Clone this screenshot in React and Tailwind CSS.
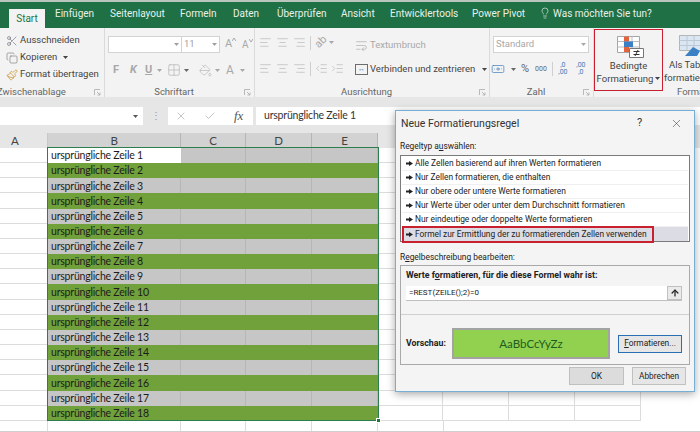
import React from "react";
import { Scissors, Copy, Paintbrush, Lightbulb, X, Check, AlignLeft, AlignCenter, AlignRight, Grid2x2, PaintBucket, WrapText, IndentDecrease, IndentIncrease, Banknote, ArrowUp } from "lucide-react";

const Caret = ({ className = "" }) => (
  <svg width="5" height="3" viewBox="0 0 5 3" className={`shrink-0 ${className}`}><path d="M0 0h5L2.5 3z" fill="currentColor" /></svg>
);

const Launcher = () => (
  <svg width="7" height="7" viewBox="0 0 7 7" className="text-[#a9a9a9]"><path d="M.5 6V.5H6M3 3l3 3M6 3.5V6H3.5" fill="none" stroke="currentColor" strokeWidth=".8" /></svg>
);

const tabs = [
  ["Einfügen", "w-[55px]"],
  ["Seitenlayout", "w-[70px]"],
  ["Formeln", "w-[53px]"],
  ["Daten", "w-[44px]"],
  ["Überprüfen", "w-[64px]"],
  ["Ansicht", "w-[49px]"],
  ["Entwicklertools", "w-[82px]"],
  ["Power Pivot", "w-[68px]"],
];

function TabBar() {
  return (
    <div className="h-[28px] border-t-2 border-[#b9c6bd] bg-[#1f7044] pl-[9px] flex items-end text-[10px] text-[#e8f0ea]">
      <div className="w-[36px] h-[19px] bg-[#f3f3f3] text-[#217346] flex justify-center pt-[2px]">Start</div>
      <div className="h-[26px] flex items-center">
        <div className="w-[10px]" />
        <div className="flex items-center pb-[4px] h-full">
          {tabs.map(([t, w]) => (
            <div key={t} className={`${w} shrink-0 whitespace-nowrap`}>{t}</div>
          ))}
          <Lightbulb size={12} strokeWidth={1.3} className="ml-[-1px]" />
          <div className="ml-[2px] whitespace-nowrap">Was möchten Sie tun?</div>
        </div>
      </div>
    </div>
  );
}

function Group({ w, label, children, start = false, launcher = true }) {
  return (
    <div className={`${w} shrink-0 h-full flex flex-col border-r border-[#dadada]`}>
      <div className="flex-1 relative min-h-0">{children}</div>
      <div className={`h-[12px] mb-[-1px] flex items-center ${start ? "justify-start" : "justify-center pr-[11px]"} relative text-[9.5px] text-[#666] whitespace-nowrap overflow-hidden`}>
        <span className={start ? "-ml-[3px]" : ""}>{label}</span>
        {launcher && <span className="absolute right-[3px] top-[3px]"><Launcher /></span>}
      </div>
    </div>
  );
}

function Ribbon() {
  const g = "text-[#a8a8a8]";
  return (
    <div className="h-[69px] bg-[#f3f3f3] flex text-[9.5px] text-[#444] whitespace-nowrap">
      <Group w="w-[105px]" label="Zwischenablage" start>
        <div className="pl-[6px] pt-[4px] flex flex-col">
          <div className="h-[17px] flex items-center gap-[2px]"><Scissors size={12} className="text-[#6c6f80]" strokeWidth={1.3} /><span>Ausschneiden</span></div>
          <div className="h-[17px] flex items-center gap-[2px]"><Copy size={12} className="text-[#7d7d7d]" strokeWidth={1.3} /><span>Kopieren</span><Caret className="ml-[4px]" /></div>
          <div className="h-[17px] flex items-center gap-[2px]"><Paintbrush size={12} className="text-[#c99a3b]" strokeWidth={1.6} /><span>Format übertragen</span></div>
        </div>
      </Group>
      <Group w="w-[150px]" label="Schriftart">
        <div className="pl-[3px] pt-[8px]">
          <div className="flex items-center">
            <div className="w-[112px] h-[17px] bg-white border border-[#d3d3d3] flex items-center text-[#a0a0a0]">
              <div className="w-[73px] h-full border-r border-[#d3d3d3] flex items-center justify-end pr-[2px]"><Caret /></div>
              <div className="flex-1 flex items-center justify-between px-[2px]"><span>11</span><Caret /></div>
            </div>
            <div className={`ml-[5px] w-[17px] flex items-start text-[11px] ${g}`}>A<svg width="4" height="3" viewBox="0 0 4 3" className="mt-[2px]"><path d="M0 3l2-3 2 3" fill="none" stroke="currentColor" /></svg></div>
            <div className={`flex items-start text-[10px] ${g}`}>A<svg width="4" height="3" viewBox="0 0 4 3" className="mt-[2px]"><path d="M0 0l2 3 2-3" fill="none" stroke="currentColor" /></svg></div>
          </div>
          <div className={`flex items-center mt-[8px] text-[11px] font-bold ${g}`}>
            <span className="ml-[5px] w-[17px]">F</span>
            <span className="w-[15px] italic">K</span>
            <span className="w-[12px] underline">U</span>
            <Caret className="mr-[5px]" />
            <Grid2x2 size={14} strokeWidth={1} className="mr-[2px]" />
            <Caret className="ml-[1px] mr-[10px] text-[#666]" />
            <PaintBucket size={13} strokeWidth={1} />
            <Caret className="ml-[3px] mr-[6px]" />
            <span className="text-[12px] font-normal">A</span>
            <Caret className="ml-[6px]" />
          </div>
        </div>
      </Group>
      <Group w="w-[235px]" label="Ausrichtung">
        <div className={`flex ${g}`}>
          <div className="pl-[3px] pt-[5px] w-[96px] shrink-0">
            <div className="flex items-center h-[19px]">
              <AlignLeft size={13} strokeWidth={1} className="ml-[1px] mr-[4px]" />
              <AlignCenter size={13} strokeWidth={1} className="mr-[4px]" />
              <AlignRight size={13} strokeWidth={1} />
              <div className="w-px h-[14px] bg-[#cfcfcf] mx-[4px]" />
              <span className="text-[11px] -rotate-45">ab</span>
              <Caret className="ml-[2px]" />
            </div>
            <div className="flex items-center h-[19px] mt-[7px]">
              <AlignLeft size={13} strokeWidth={1} className="ml-[1px] mr-[4px]" />
              <AlignCenter size={13} strokeWidth={1} className="mr-[4px]" />
              <AlignRight size={13} strokeWidth={1} />
              <div className="w-px h-[14px] bg-[#cfcfcf] mx-[4px]" />
              <IndentDecrease size={13} strokeWidth={1} className="mr-[3px]" />
              <IndentIncrease size={13} strokeWidth={1} />
            </div>
          </div>
          <div className="pt-[9px] pl-[4px]">
            <div className="flex items-center gap-[2px] h-[17px]"><WrapText size={13} strokeWidth={1.2} /><span>Textumbruch</span></div>
            <div className="flex items-center gap-[2px] h-[17px] mt-[7px] text-[#444]">
              <div className="w-[13px] h-[11px] shrink-0 border border-[#6d6d6d] flex items-center justify-center text-[#3578b5] text-[7px] leading-none">↔</div>
              <span>Verbinden und zentrieren</span>
              <Caret className="ml-[5px]" />
            </div>
          </div>
        </div>
      </Group>
      <Group w="w-[104px]" label="Zahl">
        <div className="pl-[3px] pt-[8px]">
          <div className="w-[96px] h-[17px] bg-white border border-[#d3d3d3] flex items-center justify-between px-[2px] text-[#a8a8a8]"><span>Standard</span><Caret /></div>
          <div className="flex items-center mt-[8px] text-[#666]">
            <Banknote size={14} strokeWidth={1.2} className="text-[#3f7cba] ml-[-2px]" />
            <Caret className="ml-[6px] mr-[5px]" />
            <span className="text-[11px]">%</span>
            <span className="text-[7px] ml-[6px]">000</span>
            <div className="w-px h-[14px] bg-[#cfcfcf] ml-[5px] mr-[3px]" />
            <span className="text-[7px] leading-[7px] w-[14px] text-center text-[#3f7cba]">,0<br />,00</span>
            <span className="text-[7px] leading-[7px] w-[14px] ml-[4px] text-center text-[#3f7cba]">,00<br />,0</span>
          </div>
        </div>
      </Group>
      <div className="flex-1 min-w-0 h-full flex flex-col">
        <div className="flex flex-1 min-h-0">
          <div className="w-[69px] shrink-0 h-[62px] mt-[1px] border-[1.5px] border-[#c8202e] flex flex-col items-center text-[#444] leading-[13px]">
            <svg width="27" height="22" viewBox="0 0 27 22" className="mt-[5.5px] mb-[1px] ml-[3px] shrink-0">
              <path d="M.5.5h22v16H.5z" fill="#fff" stroke="#a5a5a5" />
              <path d="M.5 5.5h22M.5 11h22M7.5.5v16M15 .5v16" stroke="#bbb" fill="none" />
              <path d="M7 .5h5v5H7zM7 11h5v5H7z" fill="#e2633d" />
              <path d="M7 5.5h9V11H7z" fill="#3b7fc4" />
              <path d="M12.5 12.5h14v9h-14z" fill="#fff" stroke="#777" />
              <path d="M16.5 15.5h6M16.5 18.5h6M21 14l-3 6" stroke="#333" fill="none" />
            </svg>
            <div>Bedingte</div>
            <div className="flex items-center">Formatierung<Caret className="ml-[2px]" /></div>
          </div>
          <div className="flex-1 min-w-0 flex flex-col items-start text-[#444] leading-[13px] overflow-hidden pl-[1px] pt-[7px]">
            <svg width="24" height="22" viewBox="0 0 24 22" className="ml-[15px] mb-[1px] shrink-0">
              <path d="M.5.5h22v15H.5z" fill="#dbe6f3" stroke="#b5b5b5" />
              <path d="M.5 5.5h22M.5 10.5h22M8 .5v15M15 .5v15" stroke="#bcc8d6" fill="none" />
              <path d="M6 21l8-9 7 4-3 5z" fill="#3b7fc4" />
            </svg>
            <div className="pl-[5px]">Als Tabelle</div>
            <div>formatieren</div>
          </div>
        </div>
        <div className="h-[12px] mb-[-1px] pl-[83px] flex items-center text-[9.5px] text-[#666] overflow-hidden">Format</div>
      </div>
    </div>
  );
}

function FormulaBar() {
  return (
    <div className="h-[36px] bg-[#e6e6e6] pt-[10px] pb-[8px] flex items-stretch text-[#a5a5a5]">
      <div className="w-[143px] bg-white flex items-center justify-end pr-[5px] text-[#555]"><Caret /></div>
      <div className="w-[25px] flex items-center justify-center text-[10px] text-[#999] leading-none">⋮</div>
      <div className="w-[85px] bg-white flex items-center pl-[7px] gap-[17px]">
        <X size={12} strokeWidth={1.3} />
        <Check size={12} strokeWidth={1.3} />
        <span className="ml-[1px] font-['Liberation_Serif',serif] italic text-[13px] text-[#555]">fx</span>
      </div>
      <div className="ml-[3px] flex-1 bg-white flex items-center pl-[8px] font-['Lato',sans-serif] text-[10.5px] tracking-[-0.2px] text-[#333]">ursprüngliche Zeile 1</div>
    </div>
  );
}

const rowsData = Array.from({ length: 18 }, (_, i) => i + 1);

function Sheet() {
  const head = "h-full flex items-center justify-center border-r";
  const rest = (
    <>
      <div className="w-[65px] shrink-0 h-full border-r border-[#dcdcdc]" />
      <div className="w-[66px] shrink-0 h-full border-r border-[#dcdcdc]" />
      <div className="w-[66px] shrink-0 h-full border-r border-[#dcdcdc]" />
      <div className="w-[66px] shrink-0 h-full border-r border-[#dcdcdc]" />
    </>
  );
  return (
    <div className="relative font-['Lato',sans-serif] text-[10.5px] tracking-[-0.2px] text-[#1c1c1c]">
      <div className="h-[15px] bg-[#e6e6e6] flex text-[#444] text-[11.5px]">
        <div className="w-[48px] h-full flex items-center pl-[11px] border-r border-[#c8c8c8]">A</div>
        <div className={`w-[133px] bg-[#d2d2d2] ${head} border-[#b5b5b5]`}>B</div>
        <div className={`w-[65px] bg-[#d2d2d2] ${head} border-[#b5b5b5]`}>C</div>
        <div className={`w-[66px] bg-[#d2d2d2] ${head} border-[#b5b5b5]`}>D</div>
        <div className={`w-[66px] bg-[#d2d2d2] ${head} border-[#b5b5b5]`}>E</div>
      </div>
      {rowsData.map((n) => {
        const green = n % 2 === 0;
        const gray = green ? "bg-[#70a13b] border-[#70a13b]" : "bg-[#c6c6c6] border-[#b6b6b6]";
        return (
          <div key={n} className="h-[15.17px] flex">
            <div className="w-[48px] h-full shrink-0 border-b border-[#dcdcdc]" />
            <div className={`w-[133px] shrink-0 h-full pl-[3px] pt-[1px] flex items-center ${n === 1 ? "bg-white" : green ? "bg-[#70a13b]" : "bg-[#c6c6c6]"} ${n > 1 && !green ? "border-r border-[#b6b6b6]" : ""}`}>
              ursprüngliche Zeile {n}
            </div>
            <div className={`w-[65px] shrink-0 h-full border-r ${gray}`} />
            <div className={`w-[66px] shrink-0 h-full border-r ${gray}`} />
            <div className={`w-[66px] shrink-0 h-full border-r ${gray}`} />
            <div className="flex border-b border-[#dcdcdc] h-full">{rest}</div>
          </div>
        );
      })}
      <div className="h-[11px] flex border-b border-[#cfcfcf]">
        <div className="w-[48px] shrink-0 h-full border-r border-[#dcdcdc]" />
        <div className="w-[133px] shrink-0 h-full border-r border-[#dcdcdc]" />
        {rest}
      </div>
      <div className="absolute left-[47px] top-[14px] w-[332px] h-[274px] border-[1.5px] border-[#2e7d4f] pointer-events-none">
        <div className="absolute right-[-3px] bottom-[-3px] w-[5px] h-[5px] bg-[#217346] border border-white" />
      </div>
    </div>
  );
}

const rules = [
  "Alle Zellen basierend auf ihren Werten formatieren",
  "Nur Zellen formatieren, die enthalten",
  "Nur obere oder untere Werte formatieren",
  "Nur Werte über oder unter dem Durchschnitt formatieren",
  "Nur eindeutige oder doppelte Werte formatieren",
  "Formel zur Ermittlung der zu formatierenden Zellen verwenden",
];

function Dialog() {
  return (
    <div className="absolute left-[395px] top-[110px] w-[300px] h-[282px] bg-[#f4f4f4] border border-[#76aed6] shadow-[0_2px_8px_rgba(0,0,0,0.35)] text-[8.4px] text-[#222] px-[4px] whitespace-nowrap">
      <div className="h-[25px] flex items-center text-[10.5px] text-[#333] pl-[1px]">
        <span className="flex-1">Neue Formatierungsregel</span>
        <span className="w-[14px] text-[11px] mr-[19px]">?</span>
        <X size={13} strokeWidth={1} className="mr-[7px] text-[#333]" />
      </div>
      <div className="h-[18px] mt-[1px] flex items-center">Regeltyp a<u>u</u>swählen:</div>
      <div className="h-[87px] border border-[#7a7a7a] bg-white pt-[1px] px-[1px]">
        {rules.map((r, i) => (
          <div key={r} className={`h-[14px] flex items-center pl-[4px] gap-[2px] ${i === 5 ? "bg-[#dcdce4] relative" : "border-b border-[#f0f0f0]"}`}>
            <svg width="7" height="5" viewBox="0 0 7 5" className="shrink-0"><path d="M0 1.5h3V0l4 2.5L3 5V3.5H0z" fill="#222" /></svg>
            <span>{r}</span>
            {i === 5 && <div className="absolute left-0 -top-[1px] w-[252px] h-[17px] border-2 border-[#c8202e] z-10" />}
          </div>
        ))}
      </div>
      <div className="h-[16px] mt-[7px] flex items-center">R<u>e</u>gelbeschreibung bearbeiten:</div>
      <div className="h-[100px] border border-[#a9a9a9] flex flex-col">
        <div className="h-[49px] shrink-0 border-b border-[#d0d0d0] px-[5px]">
          <div className="h-[20px] text-[8.8px] font-bold flex items-center">Werte f<u>o</u>rmatieren, für die diese Formel wahr ist:</div>
          <div className="h-[15px] mr-[2px] bg-white border-b border-[#c0c0c0] flex items-center pl-[3px] justify-between">
            <span className="text-[8px]">=REST(ZEILE();2)=0</span>
            <div className="w-[15px] h-full bg-[#eaeaea] border border-[#c0c0c0] flex items-center justify-center"><ArrowUp size={10} strokeWidth={3} /></div>
          </div>
        </div>
        <div className="flex-1 flex items-center px-[5px] pt-[8px]">
          <span className="font-bold text-[8.8px] w-[46px]">Vorschau:</span>
          <div className="w-[158px] h-[31px] bg-[#92d050] border-2 border-[#a3a3a3] flex items-center justify-center font-['Lato',sans-serif] text-[11.5px] text-[#1b5e20]">AaBbCcYyZz</div>
          <div className="ml-[8px] w-[64px] h-[18px] bg-[#e6e6e6] border border-[#2a6fb3] flex items-center justify-center"><span><u>F</u>ormatieren...</span></div>
        </div>
      </div>
      <div className="flex justify-end mt-[2px] gap-[8px] pr-[4px]">
        <div className="w-[55px] h-[18px] bg-[#dcdcdc] border border-[#c0c0c0] flex items-center justify-center">OK</div>
        <div className="w-[54px] h-[18px] bg-[#e6e6e6] border border-[#c0c0c0] flex items-center justify-center">Abbrechen</div>
      </div>
    </div>
  );
}

export default function App() {
  return (
    <div className="relative w-[700px] h-[432px] overflow-hidden bg-white font-['Roboto',sans-serif]">
      <TabBar />
      <Ribbon />
      <FormulaBar />
      <Sheet />
      <Dialog />
    </div>
  );
}
